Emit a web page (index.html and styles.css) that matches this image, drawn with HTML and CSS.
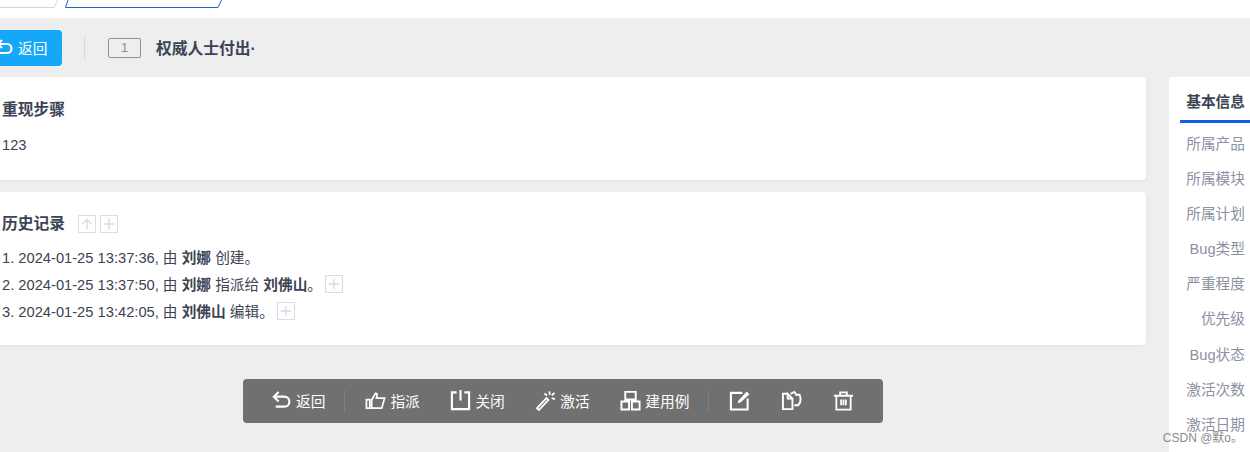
FILE: index.html
```html
<!DOCTYPE html>
<html lang="zh-CN">
<head>
    <meta charset="utf-8">
    <title>Bug详情</title>
    <link rel="stylesheet" href="styles.css">
</head>
<body>

<header class="top-tabs">
    <svg class="tab-lines" width="240" height="18" viewBox="0 0 240 18">
        <path d="M0 7.500H54L57.500 0" fill="none" stroke="#d3d5de"/>
        <path d="M68 0L65.500 7.500H218L221.500 0" fill="none" stroke="#1f62cf"/>
    </svg>
</header>

<div class="title-bar">
    <a class="back-btn" href="#">
        <svg class="icon" width="18" height="18" viewBox="0 0 18 18"><path d="M7 2L3 6L7 10M3.500 6H12A4.500 4.500 0 0 1 12 15H4" fill="none" stroke="currentColor" stroke-width="2.200"/></svg>
        返回
    </a>
    <span class="bar-divider"></span>
    <span class="id-badge">1</span>
    <span class="bug-title">权威人士付出·</span>
</div>

<div class="content">
    <main class="main-col">
        <section class="card steps-card">
            <h3 class="card-title">重现步骤</h3>
            <p class="steps-text">123</p>
        </section>
        <section class="card history-card">
            <h3 class="card-title">历史记录
                <span class="mini-btn first">
                    <svg width="18" height="18" viewBox="0 0 18 18"><path d="M9 15V4M4 9L9 4L14 9" fill="none" stroke="#d5dbe5" stroke-width="1.500"/></svg>
                </span>
                <span class="mini-btn">
                    <svg width="18" height="18" viewBox="0 0 18 18"><path d="M9 3V15M3 9H15" fill="none" stroke="#d5dbe5" stroke-width="1.500"/></svg>
                </span>
            </h3>
            <ol class="history-list">
                <li><span>1. 2024-01-25 13:37:36, 由 <b>刘娜</b> 创建。</span></li>
                <li><span>2. 2024-01-25 13:37:50, 由 <b>刘娜</b> 指派给 <b>刘佛山</b>。</span>
                    <span class="mini-btn">
                        <svg width="18" height="18" viewBox="0 0 18 18"><path d="M9 3V15M3 9H15" fill="none" stroke="#d5dbe5" stroke-width="1.500"/></svg>
                    </span>
                </li>
                <li><span>3. 2024-01-25 13:42:05, 由 <b>刘佛山</b> 编辑。</span>
                    <span class="mini-btn">
                        <svg width="18" height="18" viewBox="0 0 18 18"><path d="M9 3V15M3 9H15" fill="none" stroke="#d5dbe5" stroke-width="1.500"/></svg>
                    </span>
                </li>
            </ol>
        </section>

        <!-- bottom action bar -->
        <div class="action-bar">
            <a class="action first-action" href="#">
                <svg width="21" height="21" viewBox="0 0 22 22"><path d="M8 2L3 7L8 12M3.500 7H14A5 5 0 0 1 14 17.500H5" fill="none" stroke="currentColor" stroke-width="2.300"/></svg>
                返回
            </a>
            <span class="action-divider"></span>
            <a class="action" href="#">
                <svg width="21" height="21" viewBox="0 0 22 22"><path d="M1.500 10H5V19H1.500ZM7 10.500L11 3.500C12.500 3.500 13 4.500 12.500 6L12 8.500H20.500L17.500 19H7Z" fill="none" stroke="currentColor" stroke-width="1.800"/></svg>
                指派
            </a>
            <a class="action" href="#">
                <svg width="21" height="21" viewBox="0 0 22 22"><path d="M7 2.500H2V20H20V2.500H15M11 0V11" fill="none" stroke="currentColor" stroke-width="2.200"/></svg>
                关闭
            </a>
            <a class="action" href="#">
                <svg width="21" height="21" viewBox="0 0 22 22"><path d="M2 19L4 21L14 10.500L12 8.500ZM15 1.500L15.500 5M20.500 3L17.500 5.500M21 9.500L17.500 8.500M10 3.500L12.500 6" fill="none" stroke="currentColor" stroke-width="1.900"/></svg>
                激活
            </a>
            <a class="action" href="#">
                <svg width="21" height="21" viewBox="0 0 22 22"><path d="M5.500 2H16.500V10H5.500ZM1.500 12H9.500V20.500H1.500ZM12.500 12H20.500V20.500H12.500Z" fill="none" stroke="currentColor" stroke-width="2"/></svg>
                建用例
            </a>
            <span class="action-divider"></span>
            <a class="action icon-only" href="#">
                <svg width="21" height="21" viewBox="0 0 22 22"><path d="M14 3H2V20.500H19.500V9" fill="none" stroke="currentColor" stroke-width="2.200"/><path d="M9 14L10 11L18.500 1.500L21.500 4.500L12 13Z" fill="currentColor"/></svg>
            </a>
            <a class="action icon-only" href="#">
                <svg width="21" height="21" viewBox="0 0 22 22"><path d="M7 4H2V20H12V9L7 4V9H12M10 4L14 2L17 6M15 5H19.500C21 9 21 13 18 16H14" fill="none" stroke="currentColor" stroke-width="2"/></svg>
            </a>
            <a class="action icon-only" href="#">
                <svg width="21" height="21" viewBox="0 0 22 22"><path d="M1 6H21M7.500 6V2.500H14.500V6M3.500 6V20.500H18.500V6M8.500 10V16M11 10V16M13.500 10V16" fill="none" stroke="currentColor" stroke-width="1.900"/></svg>
            </a>
        </div>
    </main>

    <aside class="side-panel">
        <div class="side-tab">基本信息</div>
        <ul class="side-list">
            <li>所属产品</li>
            <li>所属模块</li>
            <li>所属计划</li>
            <li>Bug类型</li>
            <li>严重程度</li>
            <li>优先级</li>
            <li>Bug状态</li>
            <li>激活次数</li>
            <li>激活日期</li>
        </ul>
    </aside>
</div>

<div class="watermark">CSDN @默o。</div>

</body>
</html>
```

FILE: styles.css
```css
html, body {
    height: 100%;
}
body {
    margin: 0;
    height: 452px;
    overflow: hidden;
    position: relative;
    font-family: "Liberation Sans", "Noto Sans CJK SC", sans-serif;
    font-size: 14.700px;
    color: #3c4353;
    background-color: #eeeeee;
}
.top-tabs {
    height: 18px;
    background-color: white;
}
.tab-lines {
    display: block;
}
.title-bar {
    height: 59px;
    display: flex;
    align-items: center;
    margin-left: -20px;
    padding-top: 1px;
    box-sizing: border-box;
}
.back-btn {
    display: flex;
    align-items: center;
    gap: 5px;
    width: 82px;
    height: 36px;
    box-sizing: border-box;
    padding: 0 0 2px 15px;
    background-color: #16a8f8;
    color: white;
    border-radius: 4px;
    text-decoration: none;
}
.bar-divider {
    width: 1px;
    height: 24px;
    margin: 0 23px 0 22px;
    background-color: #d8d8d8;
}
.id-badge {
    width: 33px;
    height: 20px;
    box-sizing: border-box;
    border: 1px solid #8b91a2;
    border-radius: 2px;
    color: #8b91a2;
    font-size: 13.600px;
    line-height: 18px;
    text-align: center;
}
.bug-title {
    margin-left: 15px;
    padding-bottom: 2px;
    font-size: 15.750px;
    font-weight: bold;
}
.content {
    display: flex;
    margin-left: -20px;
}
.main-col {
    width: 1166px;
    flex-shrink: 0;
}
.card {
    background-color: white;
    border-radius: 4px;
    box-shadow: 0 1px 3px rgba(0,0,0,0.06);
    padding: 23px 0 0 22px;
    box-sizing: border-box;
}
.steps-card {
    height: 103px;
}
.history-card {
    height: 153px;
    margin-top: 12px;
    padding-top: 22px;
}
.card-title {
    margin: 0;
    height: 20px;
    display: flex;
    align-items: center;
    font-size: 15.750px;
    line-height: 20px;
    font-weight: bold;
}
.steps-text {
    margin: 15px 0 0;
    line-height: 20px;
}
.history-list {
    list-style-type: none;
    margin: 9px 0 0;
    padding: 0;
}
.history-list li {
    display: flex;
    align-items: center;
    height: 27px;
    color: #3c4353;
}
.mini-btn {
    width: 18px;
    height: 18px;
    box-sizing: border-box;
    border: 1px solid #d9dce6;
    margin-left: 4px;
    display: inline-flex;
    align-items: center;
    justify-content: center;
    background-color: white;
}
.mini-btn svg {
    width: 16px;
    height: 16px;
}
.mini-btn.first {
    margin-left: 13px;
}
.history-list .mini-btn {
    margin-left: 3px;
}
.action-bar {
    width: 640px;
    height: 44px;
    margin: 34px 0 0 263px;
    display: flex;
    align-items: center;
    box-sizing: border-box;
    padding: 0 0 1px 28px;
    background-color: #707070;
    border-radius: 4px;
    color: white;
}
.action {
    display: flex;
    align-items: center;
    flex-shrink: 0;
    gap: 4px;
    margin-right: 30.600px;
    color: white;
    text-decoration: none;
    white-space: nowrap;
}
.first-action {
    margin-right: 0;
}
.action:has(+ .action-divider) {
    margin-right: 0;
}
.action-divider {
    flex-shrink: 0;
    width: 1px;
    height: 22px;
    margin: 0 20px 0 19px;
    background-color: #7f7f7f;
}
.side-panel {
    width: 81px;
    height: 375px;
    margin-left: 23px;
    background-color: white;
    border-radius: 4px 0 0 0;
    padding-left: 11px;
    box-sizing: border-box;
    flex-shrink: 0;
}
.side-tab {
    height: 46px;
    box-sizing: border-box;
    border-bottom: 3px solid #0f62e6;
    padding: 14.500px 5px 0 0;
    text-align: right;
    font-weight: bold;
    line-height: 20px;
}
.side-list {
    list-style-type: none;
    margin: 4px 0 0;
    padding: 0 5px 0 0;
}
.side-list li {
    height: 35.100px;
    line-height: 35px;
    text-align: right;
    color: #8b91a2;
}
.watermark {
    position: absolute;
    top: 428px;
    right: 7px;
    font-size: 12px;
    color: #8a8a8a;
}
```
